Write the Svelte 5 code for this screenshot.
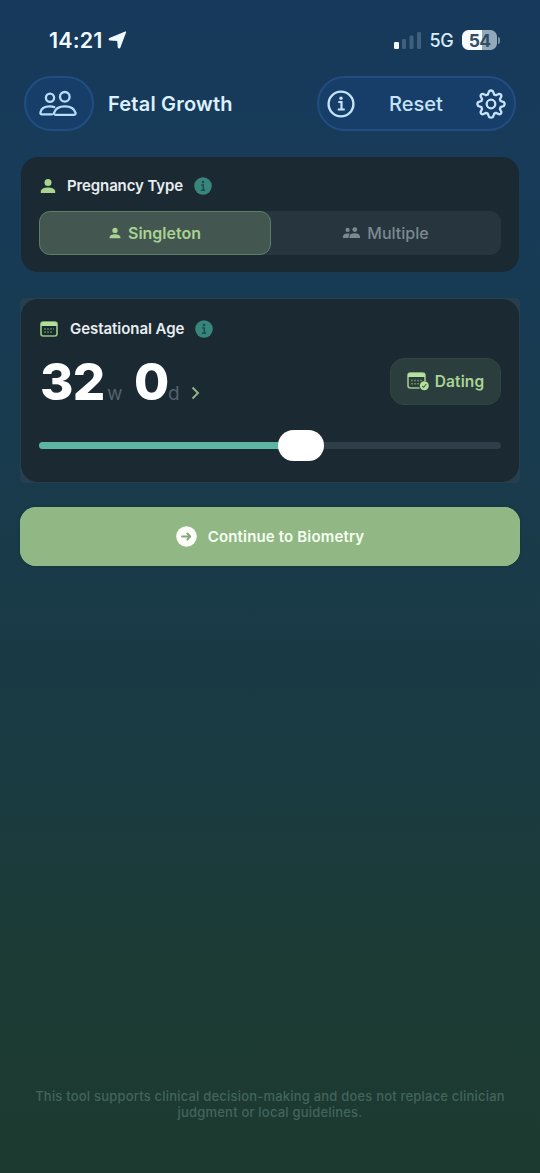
<script>
  let weeks = $state(32);
  let days = $state(0);
  let selected = $state('singleton');
  const progress = 56.8;
</script>

{#snippet person(size)}
  <svg width={size} height={size} viewBox="0 0 16 16" fill="currentColor">
    <circle cx="8" cy="4.600" r="3.500" />
    <path d="M.8 15v-1.300C.8 10.800 4.400 9.600 8 9.600s7.200 1.200 7.200 4.100V15z" />
  </svg>
{/snippet}

{#snippet info()}
  <svg class="info" width="18" height="18" viewBox="0 0 18 18">
    <circle cx="9" cy="9" r="8.800" fill="#37857c" />
    <circle cx="9" cy="5" r="1.300" fill="#1c4c4c" />
    <path d="M7.200 8H9.300V13M6.900 13.200H11.200" fill="none" stroke="#1c4c4c" stroke-width="1.500" />
  </svg>
{/snippet}

<main>
  <div class="status">
    <span class="time">14:21</span>
    <svg class="loc" width="19" height="18" viewBox="0 0 19 18"><path d="M17.500 1 11.800 16.300c-.3.700-1.300.6-1.400-.2L9.800 9.300 2 8.900c-.8-.1-1-1-.3-1.400z" fill="#f1faff" stroke="#f1faff" stroke-width="1.300" stroke-linejoin="round" /></svg>
    <svg class="signal" width="28" height="18" viewBox="0 0 28 18">
      <rect x="0" y="11" width="5" height="7" rx="1.300" fill="#f4faff" />
      <rect x="8" y="8" width="4" height="10" rx="1.300" fill="#3e607d" />
      <rect x="15.500" y="4.500" width="4" height="13.500" rx="1.300" fill="#3e607d" />
      <rect x="23" y="1" width="4" height="17" rx="1.300" fill="#3e607d" />
    </svg>
    <span class="network">5G</span>
    <div class="battery"><span>54</span></div>
    <i class="cap"></i>
  </div>

  <header>
    <button class="pill people" aria-label="Patients">
      <svg width="38" height="27" viewBox="0 0 38 27" fill="none" stroke="#b9dcfa" stroke-width="2.300" stroke-linejoin="round" stroke-linecap="round">
        <circle cx="11" cy="7.800" r="4.100" />
        <circle cx="25.800" cy="6.800" r="4.800" />
        <path d="M13 24.300H2.800c-1.100 0-1.600-.8-1.400-1.800C2 18.500 6 16.300 11 16.300c1.500 0 3 .3 4.200.8" />
        <path d="M16.500 24.800h18.600c1.200 0 1.700-.9 1.400-2C35.400 18.800 31.300 16.300 25.800 16.300S16.200 18.800 15.100 22.800c-.3 1.100.2 2 1.400 2z" />
      </svg>
    </button>
    <h1>Fetal Growth</h1>
    <div class="pill actions">
      <svg width="28" height="28" viewBox="0 0 28 28" fill="none" stroke="#c5e3fb">
        <circle cx="14" cy="14" r="12.400" stroke-width="2.400" />
        <path d="M11.300 12h3.200v7.300M10.800 19.500h7" stroke-width="2.200" />
        <circle cx="14" cy="8.300" r="1.700" fill="#c5e3fb" stroke="none" />
      </svg>
      <span class="reset">Reset</span>
      <svg width="30" height="30" viewBox="0 0 30 30" fill="none" stroke="#c5e3fb" stroke-width="2.300" stroke-linejoin="round">
        <path d="M13 2.300Q15 .7 17 2.300L18.200 5.600Q19.100 5.900 20 6.300L23.100 4.800Q25.500 5 25.400 7.200L23.900 10.300Q24.300 11.200 24.600 12L27.800 13.100Q29.400 15 27.800 17L24.600 18.200Q24.300 19.100 23.900 19.900L25.400 23Q25.300 25.300 23.100 25.300L20 23.900Q19.100 24.300 18.200 24.600L17 27.800Q15 29.400 13 27.800L11.800 24.600Q10.900 24.300 10 23.900L6.900 25.300Q4.700 25.300 4.600 23L6.100 19.900Q5.700 19.100 5.400 18.200L2.200 17Q.6 15 2.200 13.100L5.400 12Q5.700 11.200 6.100 10.300L4.600 7.200Q4.500 5 6.900 4.800L10 6.300Q10.900 5.900 11.800 5.600Z" />
        <circle cx="15" cy="15" r="4.300" />
      </svg>
    </div>
  </header>

  <section class="card type">
    <div class="title">
      <span class="green">{@render person(16)}</span>
      <h2>Pregnancy Type</h2>
      {@render info()}
    </div>
    <div class="segments">
      <button class:on={selected === 'singleton'} onclick={() => (selected = 'singleton')}>
        {@render person(12)}<span>Singleton</span>
      </button>
      <button class:on={selected === 'multiple'} onclick={() => (selected = 'multiple')}>
        <svg width="17" height="12" viewBox="0 0 17 12" fill="currentColor">
          <circle cx="4.600" cy="2.900" r="2.100" /><circle cx="11.800" cy="2.600" r="2.400" />
          <path d="M0 11V9.500C0 7.500 2 6.500 4.600 6.500c.9 0 1.700.1 2.400.4C6 7.600 5.600 8.600 5.600 9.700V11zM6.400 11V9.700c0-2.300 2.300-3.400 5.300-3.400S17 7.400 17 9.700V11z" />
        </svg><span>Multiple</span>
      </button>
    </div>
  </section>

  <div class="frame">
    <section class="card age">
      <div class="title">
        <svg class="calendar" width="18" height="16" viewBox="0 0 18 16" fill="none">
          <rect x="1" y="1" width="16" height="14" rx="2.200" stroke="#91c67a" stroke-width="1.700" />
          <path d="M1 5V3Q1 1 3.500 1h11Q17 1 17 3V5z" fill="#b5df9c" />
          <path d="M4 8h10M4 11h8" stroke="#568150" stroke-width="1.700" stroke-dasharray="2 1" />
        </svg>
        <h2>Gestational Age</h2>
        {@render info()}
      </div>
      <div class="values">
        <span class="num">{weeks}</span><span class="unit w">w</span>
        <span class="num zero">{days}</span><span class="unit d">d</span>
        <svg class="chevron" width="9" height="14" viewBox="0 0 9 14"><path d="M1.500 1.500 7 7l-5.500 5.500" fill="none" stroke="#8fb284" stroke-width="2" /></svg>
        <button class="dating">
          <svg width="22" height="19" viewBox="0 0 22 19" fill="none">
            <path d="M12.500 16H3.500Q1 16 1 13.500v-10Q1 1 3.500 1h12Q18 1 18 3.500V9" stroke="#9bc98a" stroke-width="1.600" />
            <path d="M1 5V3.500Q1 1 3.500 1h12Q18 1 18 3.500V5z" fill="#b5e29d" />
            <path d="M4 8.500h11M4 11.800h8" stroke="#608659" stroke-width="1.500" stroke-dasharray="2 1" />
            <circle cx="17.300" cy="13.800" r="4.500" fill="#b5e29d" />
            <path d="m15.200 13.900 1.400 1.500 2.700-3.300" stroke="#4a7049" stroke-width="1.200" />
          </svg>
          <span>Dating</span>
        </button>
      </div>
      <div class="slider">
        <div class="fill" style="width: {progress}%"><i></i></div>
      </div>
    </section>
  </div>

  <button class="continue">
    <svg width="21" height="21" viewBox="0 0 21 21"><circle cx="10.500" cy="10.500" r="10.300" fill="#fbfff8" /><path d="M6 10.500h8.300M11.300 7.500l3 3-3 3" fill="none" stroke="#86a67c" stroke-width="1.800" stroke-linecap="round" stroke-linejoin="round" /></svg>
    <span>Continue to Biometry</span>
  </button>

  <footer><span>This tool supports clinical decision-making and does not replace clinician</span><span>judgment or local guidelines.</span></footer>
</main>

<style>
  :global(body) { margin: 0; background: #1c3a30; }
  main {
    box-sizing: border-box; width: 540px; height: 1173px; overflow: hidden;
    display: flex; flex-direction: column; padding: 0 20px;
    font-family: Inter, "Noto Sans", sans-serif; color: #e7edf0;
    background: linear-gradient(180deg, #17395b 0, #173b59 160px, #183b50 400px, #193a48 570px, #1a3b41 780px, #1c3b35 960px, #1c3a2f 1173px);
  }
  button { font: inherit; border: 0; margin: 0; padding: 0; color: inherit; background: none; }
  svg { flex: none; display: block; }
  h1, h2 { margin: 0; white-space: nowrap; }
  .status { height: 32px; padding: 24px 20px 0 29px; display: flex; align-items: center; }
  .time { font-size: 21.500px; font-weight: 600; color: #eff9ff; width: 59px; letter-spacing: .15px; white-space: nowrap; }
  .signal { margin-left: 267px; }
  .network { width: 25px; margin-left: 8px; font-size: 18px; font-weight: 500; color: #d8edfb; letter-spacing: -.3px; }
  .battery { width: 35px; height: 20px; margin-left: 8px; border-radius: 6.500px; background: linear-gradient(90deg, #f5faff 56%, #91a9bb 56%); color: #324e64; display: flex; align-items: center; justify-content: center; font-size: 17.500px; font-weight: 700; letter-spacing: -.5px; }
  .cap { width: 2px; height: 7px; margin-left: 1px; border-radius: 0 3px 3px 0; background: #7791a7; }
  header { height: 55px; margin-top: 20px; padding: 0 4px; display: flex; align-items: center; }
  .pill { box-sizing: border-box; height: 55px; border: 2px solid #204e80; border-radius: 28px; background: #173e69; display: flex; align-items: center; }
  .people { width: 70px; justify-content: center; }
  .people svg { margin-right: 2px; }
  h1 { margin-left: 14px; font-size: 20px; font-weight: 600; color: #ddf0ff; letter-spacing: .2px; }
  .actions { width: 199px; margin-left: auto; padding: 0 8px; justify-content: space-between; }
  .reset { font-size: 20px; color: #c7e3f8; font-weight: 450; margin-left: 1px; }
  .card { box-sizing: border-box; border-radius: 17px; background: #1b2932; padding: 0 18px; }
  .type { height: 115px; width: 498px; margin: 26px 1px 0; }
  .title { display: flex; align-items: center; height: 18px; }
  .type .title { padding-top: 20px; }
  .green { color: #a7d58d; margin-left: 1px; }
  h2 { font-size: 15px; font-weight: 600; line-height: 18px; }
  .type h2 { margin-left: 11px; letter-spacing: -.12px; }
  .age h2 { margin-left: 12px; letter-spacing: -.05px; }
  .info { margin-left: 11px; }
  .segments { height: 44px; margin-top: 16px; display: flex; border-radius: 11px; background: #26353e; }
  .segments button { box-sizing: border-box; flex: 1; display: flex; align-items: center; justify-content: center; gap: 7px; color: #7c8990; font-size: 16px; font-weight: 500; border-radius: 11px; }
  .segments .on { background: #43564f; border: 1.500px solid #5e7f67; color: #a9d293; font-weight: 600; }
  .frame { width: 500px; margin: 26px 0 0; background: #263f4e; border-radius: 5px; }
  .age { width: 498px; height: 183px; margin: 1px; }
  .age .title { padding-top: 21px; }
  .calendar { margin: -1px 0 0 1px; }
  .values { height: 48px; margin-top: 19px; padding-left: 1px; display: flex; align-items: baseline; }
  .num { font-size: 51px; line-height: 50px; font-weight: 800; color: #fff; letter-spacing: -.7px; width: 67px; }
  .zero { width: 34px; margin-left: 10px; }
  .unit { font-size: 19px; color: #53616a; width: 17px; }
  .d { width: 12px; margin-left: 0; }
  .chevron { margin-left: 11px; }
  .dating { box-sizing: border-box; align-self: flex-start; margin: 1px 0 0 auto; width: 111px; height: 47px; border-radius: 14px; background: #2b3d3d; border: 1px solid #304642; display: flex; align-items: center; justify-content: center; gap: 6px; color: #a8d495; font-size: 15.500px; font-weight: 600; letter-spacing: .1px; }
  .slider { height: 7px; margin-top: 37px; border-radius: 4px; background: #2f3e48; }
  .fill { height: 7px; border-radius: 4px; background: #5cb4a2; position: relative; }
  .fill i { position: absolute; right: -23px; top: -12px; width: 46px; height: 31px; border-radius: 16px; background: #fff; }
  .continue { width: 500px; height: 59px; flex: none; margin-top: 24px; border-radius: 16px; background: #91b884; box-shadow: 0 0 2px 1px #173b38, inset 0 0 0 1px #8cb98d; display: flex; align-items: center; justify-content: center; gap: 11px; color: #f6fff2; font-size: 15px; font-weight: 600; letter-spacing: .16px; }
  footer { margin-top: auto; margin-bottom: 53px; display: flex; flex-direction: column; align-items: center; color: #43645d; font-size: 13px; font-weight: 500; letter-spacing: .2px; line-height: 15.500px; white-space: nowrap; }
</style>
